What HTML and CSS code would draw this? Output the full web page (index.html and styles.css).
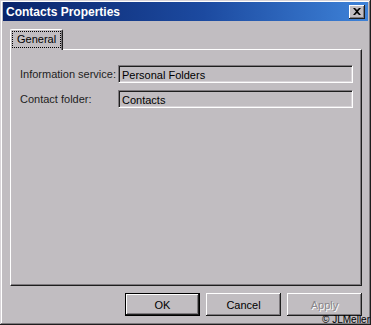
FILE: index.html
```html
<!DOCTYPE html>
<html lang="en">
<head>
    <meta charset="UTF-8">
    <title>Contacts Properties</title>
    <link rel="stylesheet" href="styles.css">
</head>
<body>
    <div class="window">
        <div class="titlebar">
            <span class="title">Contacts Properties</span>
            <button class="close-btn" aria-label="Close">
                <svg width="8" height="7" viewBox="0 0 8 7">
                    <path d="M0 0h2l2 2 2-2h2L5 3.5 8 7H6L4 5 2 7H0l3-3.5z" fill="#000"/>
                </svg>
            </button>
        </div>
        <div class="dialog">
            <div class="tabs">
                <div class="tab active"><span class="focus">General</span></div>
            </div>
            <div class="panel">
                <div class="field-row">
                    <label class="field-label">Information service:</label>
                    <div class="field-box">Personal Folders</div>
                </div>
                <div class="field-row">
                    <label class="field-label">Contact folder:</label>
                    <div class="field-box">Contacts</div>
                </div>
            </div>
            <div class="buttons">
                <button class="btn default">OK</button>
                <button class="btn">Cancel</button>
                <button class="btn disabled">Apply</button>
            </div>
        </div>
        <div class="credit">&copy; JLMeller</div>
    </div>
</body>
</html>
```

FILE: styles.css
```css
body {
    margin: 0;
    padding: 0;
    background-color: #c1bdc1;
    font-family: "Liberation Sans", Arial, sans-serif;
    font-size: 11px;
    color: #000;
}
.window {
    position: relative;
    width: 371px;
    height: 325px;
    box-sizing: border-box;
    padding: 2px 3px 3px 3px;
    background-color: #c1bdc1;
    box-shadow: inset -1px -1px 0 #1e1e1e, inset 1px 1px 0 #d8d4d8, inset -2px -2px 0 #7e7a7e, inset 2px 2px 0 #fff;
    overflow: hidden;
}
.titlebar {
    height: 19px;
    display: flex;
    align-items: center;
    justify-content: space-between;
    padding: 0 3px 0 3px;
    background: linear-gradient(to right, #0a246a 0%, #1c4aa0 55%, #3e82d8 100%);
}
.title {
    color: #fff;
    font-weight: bold;
    font-size: 12px;
}
.close-btn {
    width: 16px;
    height: 14px;
    padding: 0;
    border: none;
    background-color: #c1bdc1;
    box-shadow: inset -1px -1px 0 #1e1e1e, inset 1px 1px 0 #fff, inset -2px -2px 0 #7e7a7e;
    display: flex;
    align-items: center;
    justify-content: center;
}
.dialog {
    padding: 8px 6px 0 7px;
}
.tabs {
    display: flex;
    height: 20px;
}
.tab {
    position: relative;
    z-index: 1;
    height: 21px;
    padding: 1px 1px 0 1px;
    box-sizing: border-box;
    background-color: #c1bdc1;
    border-top: 1px solid #fff;
    border-left: 1px solid #fff;
    border-right: 1px solid #1e1e1e;
    border-radius: 2px 2px 0 0;
    box-shadow: inset -1px 0 0 #7e7a7e;
}
.focus {
    display: inline-block;
    padding: 2px 5px 2px 5px;
    outline: 1px dotted #000;
    outline-offset: -1px;
    line-height: 13px;
}
.panel {
    height: 237px;
    box-sizing: border-box;
    padding: 15px 8px 0 9px;
    border-top: 1px solid #fff;
    border-left: 1px solid #fff;
    border-right: 1px solid #1e1e1e;
    border-bottom: 1px solid #1e1e1e;
    box-shadow: inset -1px -1px 0 #7e7a7e;
    display: flex;
    flex-direction: column;
    gap: 7px;
}
.field-row {
    display: flex;
    align-items: center;
}
.field-label {
    width: 98px;
    color: #1e1e1e;
}
.field-box {
    flex: 1;
    height: 18px;
    box-sizing: border-box;
    padding: 2px 3px;
    line-height: 14px;
    border-top: 1px solid #7e7a7e;
    border-left: 1px solid #7e7a7e;
    border-right: 1px solid #fff;
    border-bottom: 1px solid #fff;
    box-shadow: inset 1px 1px 0 #1e1e1e, inset -1px -1px 0 #d8d4d8;
}
.buttons {
    display: flex;
    justify-content: flex-end;
    gap: 6px;
    padding-top: 7px;
}
.btn {
    width: 75px;
    height: 23px;
    padding: 0;
    font-family: "Liberation Sans", Arial, sans-serif;
    font-size: 11px;
    color: #000;
    background-color: #c1bdc1;
    border: none;
    box-shadow: inset -1px -1px 0 #1e1e1e, inset 1px 1px 0 #fff, inset -2px -2px 0 #7e7a7e;
}
.btn.default {
    border: 1px solid #000;
}
.btn.disabled {
    color: #8a868a;
    text-shadow: 1px 1px 0 #fff;
}
.credit {
    position: absolute;
    right: 1px;
    bottom: 0;
    font-size: 10px;
    line-height: 11px;
    color: #000;
}
```
